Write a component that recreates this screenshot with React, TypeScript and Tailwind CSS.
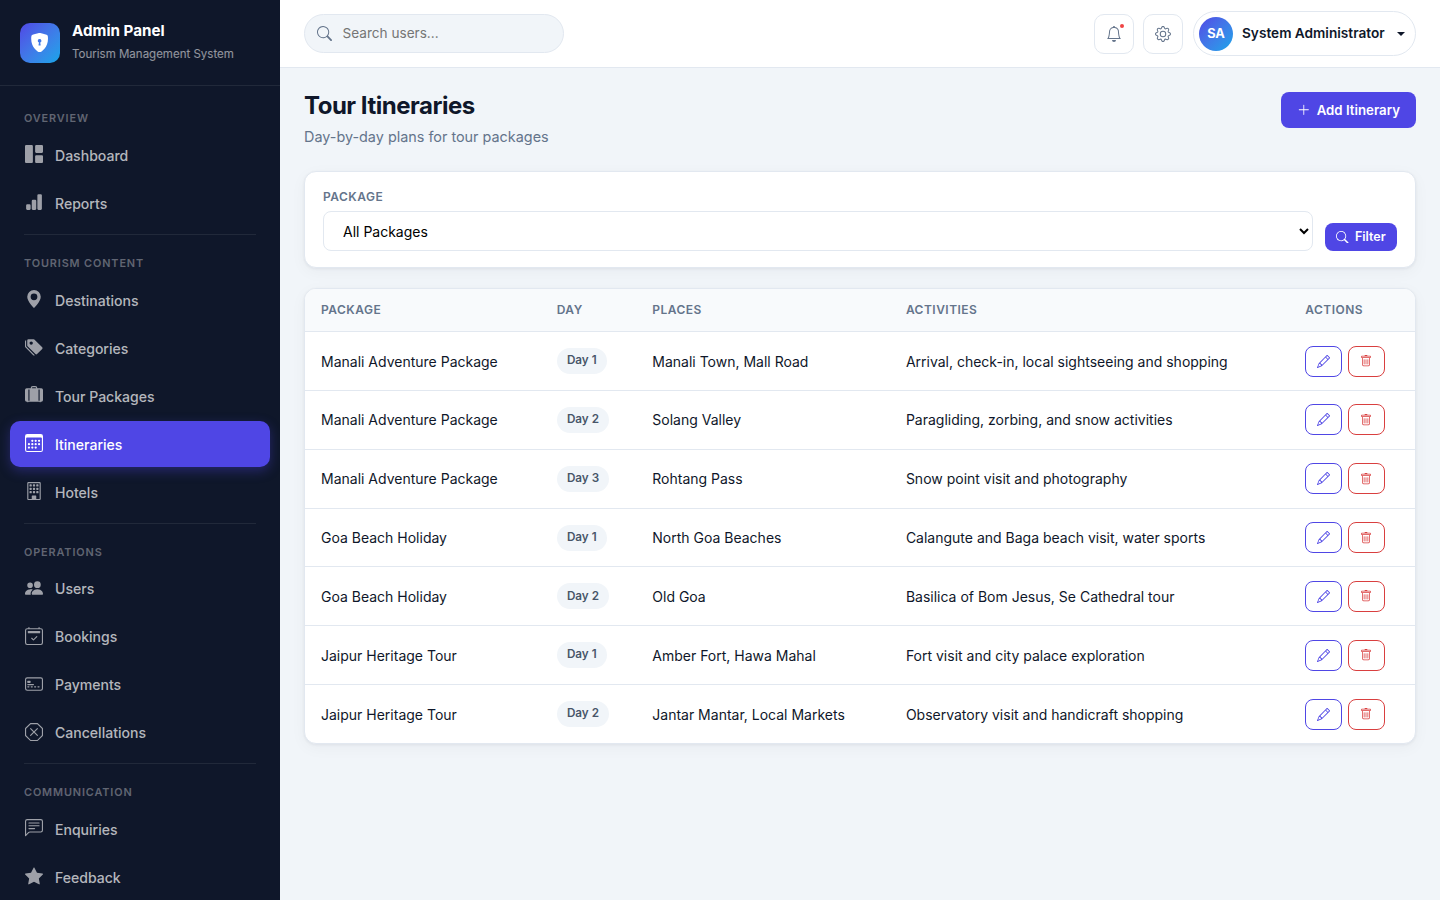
import React from "react";
import type { IconType } from "react-icons";
import {
  BsBarChartFill, BsBell, BsBuilding, BsCalendar2Check, BsCalendar3,
  BsChatLeftText, BsCreditCard2Front, BsGear, BsGeoAltFill, BsGrid1X2Fill,
  BsPencil, BsPeopleFill, BsPlusLg, BsSearch, BsShieldLockFill, BsStarFill,
  BsSuitcaseLgFill, BsTagsFill, BsTrash, BsXOctagon
} from "react-icons/bs";

interface NavItem {
  label: string;
  icon: IconType;
}

const NAV: { title: string; items: NavItem[] }[] = [
  {
    title: "Overview",
    items: [
      { label: "Dashboard", icon: BsGrid1X2Fill },
      { label: "Reports", icon: BsBarChartFill },
    ],
  },
  {
    title: "Tourism Content",
    items: [
      { label: "Destinations", icon: BsGeoAltFill },
      { label: "Categories", icon: BsTagsFill },
      { label: "Tour Packages", icon: BsSuitcaseLgFill },
      { label: "Itineraries", icon: BsCalendar3 },
      { label: "Hotels", icon: BsBuilding },
    ],
  },
  {
    title: "Operations",
    items: [
      { label: "Users", icon: BsPeopleFill },
      { label: "Bookings", icon: BsCalendar2Check },
      { label: "Payments", icon: BsCreditCard2Front },
      { label: "Cancellations", icon: BsXOctagon },
    ],
  },
  {
    title: "Communication",
    items: [
      { label: "Enquiries", icon: BsChatLeftText },
      { label: "Feedback", icon: BsStarFill },
    ],
  },
];

const ITINERARIES = [
  { pkg: "Manali Adventure Package", day: 1, places: "Manali Town, Mall Road", activities: "Arrival, check-in, local sightseeing and shopping" },
  { pkg: "Manali Adventure Package", day: 2, places: "Solang Valley", activities: "Paragliding, zorbing, and snow activities" },
  { pkg: "Manali Adventure Package", day: 3, places: "Rohtang Pass", activities: "Snow point visit and photography" },
  { pkg: "Goa Beach Holiday", day: 1, places: "North Goa Beaches", activities: "Calangute and Baga beach visit, water sports" },
  { pkg: "Goa Beach Holiday", day: 2, places: "Old Goa", activities: "Basilica of Bom Jesus, Se Cathedral tour" },
  { pkg: "Jaipur Heritage Tour", day: 1, places: "Amber Fort, Hawa Mahal", activities: "Fort visit and city palace exploration" },
  { pkg: "Jaipur Heritage Tour", day: 2, places: "Jantar Mantar, Local Markets", activities: "Observatory visit and handicraft shopping" },
];

const Sidebar: React.FC<{ active: string }> = ({ active }) => (
  <aside className="flex h-full w-[280px] shrink-0 flex-col overflow-hidden bg-[#0f172a]">
    <div className="flex h-[86px] shrink-0 items-center gap-3 border-b border-white/8 px-5">
      <div className="flex h-10 w-10 items-center justify-center rounded-[10px] bg-linear-135 from-[#4f46e5] to-[#0ea5e9] text-white">
        <BsShieldLockFill className="h-[19.2px] w-[19.2px]" />
      </div>
      <div>
        <div className="text-[15.2px] leading-[22px] font-bold text-white">Admin Panel</div>
        <div className="mt-px text-[11.52px] leading-[22px] text-white/55">Tourism Management System</div>
      </div>
    </div>

    <nav className="flex flex-col px-2.5 pt-[12.25px]">
      {NAV.map((section, i) => (
        <div key={section.title}>
          {i > 0 && <hr className="mx-3.5 mt-[5.4px] mb-2 border-white/8" />}
          <div className="px-3.5 pt-3 pb-[5.3px] text-[10.88px] leading-[17px] font-semibold tracking-[0.87px] text-white/35 uppercase">
            {section.title}
          </div>
          {section.items.map(({ label, icon: Icon }) => (
            <a
              key={label}
              className={`mb-0.5 flex h-[46px] items-center gap-[11px] rounded-[10px] px-3.5 text-[14.05px] font-medium ${
                label === active
                  ? "bg-[#4f46e5] text-white shadow-[0_4px_12px_rgba(79,70,229,0.35)]"
                  : "text-white/70"
              }`}
            >
              <span className="flex w-5 justify-center">
                <Icon className={`mb-[2.6px] h-[18px] w-[18px] ${label === active ? "" : "opacity-85"}`} />
              </span>
              <span>{label}</span>
            </a>
          ))}
        </div>
      ))}
    </nav>
  </aside>
);

const Topbar = () => (
  <header className="flex h-[68px] shrink-0 items-center justify-between border-b border-[#e2e8f0] bg-white px-6">
    <div className="mb-px flex h-[39px] w-[260px] items-center gap-[10.5px] rounded-full border border-[#e2e8f0] bg-[#f1f5f9] pl-3 text-[#64748b]">
      <BsSearch className="h-[15px] w-[15px]" />
      <input
        className="w-48 bg-transparent text-[13.6px] outline-none placeholder:text-[#757575]"
        placeholder="Search users..."
      />
    </div>
    <div className="flex items-center">
      <button className="relative mr-[9px] flex h-10 w-10 items-center justify-center rounded-[10px] border border-[#e2e8f0] text-[#64748b]">
        <BsBell className="h-4 w-4" />
        <span className="absolute top-[9px] right-[9px] h-1 w-1 rounded-full bg-[#ef4444]" />
      </button>
      <button className="mr-2.5 flex h-10 w-10 items-center justify-center rounded-[10px] border border-[#e2e8f0] text-[#64748b]">
        <BsGear className="h-4 w-4" />
      </button>
      <button className="flex h-[45px] w-[223px] items-center rounded-full border border-[#e2e8f0] pl-[5px]">
        <span className="flex h-[34px] w-[34px] items-center justify-center rounded-full bg-linear-135 from-[#4f46e5] to-[#0ea5e9] text-[12.8px] font-bold text-white">
          SA
        </span>
        <span className="ml-[9px] text-[13.65px] font-semibold text-[#0f172a]">System Administrator</span>
        <span className="ml-3 border-x-4 border-t-4 border-x-transparent border-t-[#0f172a]" />
      </button>
    </div>
  </header>
);

const Filters = () => (
  <div className="mt-6 flex h-[97px] items-end gap-3 rounded-xl border border-[#e2e8f0] bg-white px-[18px] pb-4 shadow-[0_1px_3px_rgba(15,23,42,0.06),0_4px_16px_rgba(15,23,42,0.04)]">
    <div className="flex-1">
      <label className="mb-[5px] block text-xs leading-[18px] font-semibold tracking-[0.48px] text-[#64748b] uppercase">Package</label>
      <select className="block h-10 w-full rounded-lg border border-[#e2e8f0] bg-white px-[15px] text-[14px] text-black">
        <option>All Packages</option>
      </select>
    </div>
    <button className="flex h-7 w-[72px] items-center justify-center gap-1.5 rounded-lg bg-[#4f46e5] text-[12.5px] font-semibold text-white">
      <BsSearch className="h-[12.5px] w-[12.5px]" />
      Filter
    </button>
  </div>
);

const ItineraryTable = () => (
  <div className="mt-5 overflow-hidden rounded-xl border border-[#e2e8f0] bg-white shadow-[0_1px_3px_rgba(15,23,42,0.06),0_4px_16px_rgba(15,23,42,0.04)]">
    <table className="w-full table-fixed text-left">
      <colgroup>
        <col className="w-[235.7px]" />
        <col className="w-[95.6px]" />
        <col className="w-[253.6px]" />
        <col className="w-[399.3px]" />
        <col />
      </colgroup>
      <thead>
        <tr className="h-[42.7px] border-b border-[#e2e8f0] bg-[#f8fafc] text-xs tracking-[0.48px] text-[#64748b] uppercase">
          {["Package", "Day", "Places", "Activities", "Actions"].map((h) => (
            <th key={h} className="px-4 font-semibold">{h}</th>
          ))}
        </tr>
      </thead>
      <tbody>
        {ITINERARIES.map((row, i) => (
          <tr key={i} className="h-[58.82px] border-b border-[#e2e8f0] text-[14px] text-[#0f172a] last:border-0">
            <td className="px-4">{row.pkg}</td>
            <td className="px-4">
              <span className="inline-flex h-[26px] items-center rounded-full bg-[#f1f5f9] px-[10.2px] text-[11.7px] font-semibold text-[#475569]">
                Day {row.day}
              </span>
            </td>
            <td className="px-4">{row.places}</td>
            <td className="px-4">{row.activities}</td>
            <td className="px-4">
              <div className="flex gap-1.5">
                <button className="flex h-[31px] w-[37px] items-center justify-center rounded-lg border border-[#4f46e5] text-[#4f46e5]">
                  <BsPencil className="h-[13px] w-[13px]" />
                </button>
                <button className="flex h-[31px] w-[37px] items-center justify-center rounded-lg border border-[#d93f3f] pr-px text-[#d93f3f]">
                  <BsTrash className="h-3 w-3" />
                </button>
              </div>
            </td>
          </tr>
        ))}
      </tbody>
    </table>
  </div>
);

export default function App() {
  return (
    <div className="flex h-screen overflow-hidden bg-[#f1f5f9] font-['Inter',sans-serif]">
      <Sidebar active="Itineraries" />
      <div className="flex min-w-0 flex-1 flex-col">
        <Topbar />
        <main className="flex-1 px-6 pt-6">
          <div className="flex items-start justify-between">
            <div>
              <h1 className="text-2xl leading-[28px] font-bold tracking-[-0.48px] text-[#0f172a]">Tour Itineraries</h1>
              <p className="mt-1.5 text-[14.4px] leading-[21px] text-[#64748b]">Day-by-day plans for tour packages</p>
            </div>
            <button className="flex h-9 w-[135px] items-center justify-center gap-1.5 rounded-lg bg-[#4f46e5] text-[13.25px] font-semibold text-white">
              <BsPlusLg className="h-[13.6px] w-[13.6px]" />
              <span className="pt-px">Add Itinerary</span>
            </button>
          </div>
          <Filters />
          <ItineraryTable />
        </main>
      </div>
    </div>
  );
}
